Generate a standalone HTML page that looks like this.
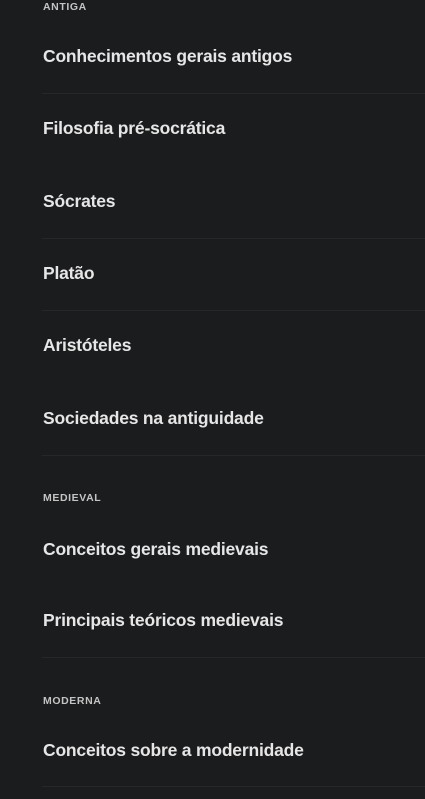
<!DOCTYPE html>
<html><head><meta charset="utf-8"><style>
html,body{margin:0;padding:0;background:#1b1c1e;width:425px;height:799px;overflow:hidden;font-family:"Liberation Sans",sans-serif}
.a{position:absolute;left:43px;white-space:nowrap}
.t{font-size:17.5px;font-weight:bold;color:#e6e6e6;letter-spacing:-0.2px}
.l{font-size:10.5px;font-weight:bold;color:#c4c4c4;letter-spacing:0.6px}
.s{position:absolute;left:42px;right:0;height:1px;background:#26272a}
</style></head><body>
<div class="a l" style="top:1px">ANTIGA</div>
<div class="a t" style="top:46px">Conhecimentos gerais antigos</div>
<div class="s" style="top:93px"></div>
<div class="a t" style="top:118px">Filosofia pré-socrática</div>
<div class="a t" style="top:191px">Sócrates</div>
<div class="s" style="top:238px"></div>
<div class="a t" style="top:263px">Platão</div>
<div class="s" style="top:310px"></div>
<div class="a t" style="top:335px">Aristóteles</div>
<div class="a t" style="top:408px">Sociedades na antiguidade</div>
<div class="s" style="top:455px"></div>
<div class="a l" style="top:492px">MEDIEVAL</div>
<div class="a t" style="top:539px">Conceitos gerais medievais</div>
<div class="a t" style="top:610px">Principais teóricos medievais</div>
<div class="s" style="top:657px"></div>
<div class="a l" style="top:695px">MODERNA</div>
<div class="a t" style="top:740px">Conceitos sobre a modernidade</div>
<div class="s" style="top:786px"></div>
</body></html>
